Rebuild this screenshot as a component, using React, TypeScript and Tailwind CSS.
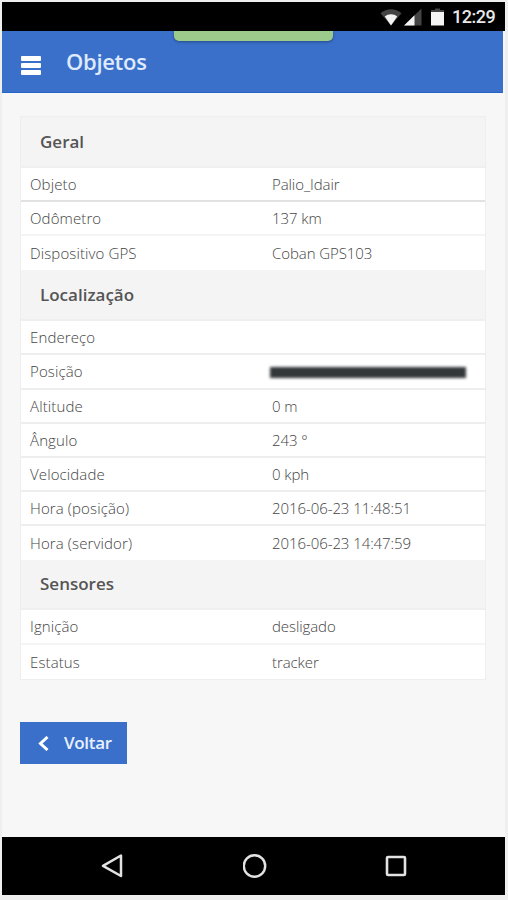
import React from 'react';

interface Row {
  label: string;
  value: string;
  height: string;
  border?: string;
  hidden?: boolean;
}

interface Section {
  title: string;
  height: string;
  rows: Row[];
}

const sections: Section[] = [
  {
    title: 'Geral',
    height: 'h-[51px]',
    rows: [
      { label: 'Objeto', value: 'Palio_Idair', height: 'h-[34px]', border: 'border-[#e2e2e2]' },
      { label: 'Odômetro', value: '137 km', height: 'h-[34px]', border: 'border-[#f4f4f4]' },
      { label: 'Dispositivo GPS', value: 'Coban GPS103', height: 'h-[34px]' },
    ],
  },
  {
    title: 'Localização',
    height: 'h-[51px]',
    rows: [
      { label: 'Endereço', value: '', height: 'h-[34px]' },
      { label: 'Posição', value: '', height: 'h-[35px]', hidden: true },
      { label: 'Altitude', value: '0 m', height: 'h-[34px]' },
      { label: 'Ângulo', value: '243 °', height: 'h-[34px]' },
      { label: 'Velocidade', value: '0 kph', height: 'h-[34px]' },
      { label: 'Hora (posição)', value: '2016-06-23 11:48:51', height: 'h-[34px]' },
      { label: 'Hora (servidor)', value: '2016-06-23 14:47:59', height: 'h-[34px]' },
    ],
  },
  {
    title: 'Sensores',
    height: 'h-[50px]',
    rows: [
      { label: 'Ignição', value: 'desligado', height: 'h-[35px]', border: 'border-[#f5f5f5]' },
      { label: 'Estatus', value: 'tracker', height: 'h-[34px]' },
    ],
  },
];

function StatusBar() {
  return (
    <div className="flex h-[29px] items-center justify-end bg-black pr-[10px]">
      <svg className="mr-[2px] h-[18px] w-[22px]" viewBox="0 0 22 18">
        <path d="M0.5 5.2C6.5-0.2 15.5-0.2 21.5 5.2L11 17.5Z" fill="#444" />
        <path d="M4.8 8.4C8.5 5.6 13.5 5.6 17.2 8.4L11 17.5Z" fill="#f4f4f4" />
      </svg>
      <svg className="mr-[9px] h-[18px] w-[18px]" viewBox="0 0 18 18">
        <path d="M0 17.5L17.5 0.5V17.5Z" fill="#444" />
        <path d="M0 17.5L10.5 7.3V17.5Z" fill="#f4f4f4" />
      </svg>
      <svg className="mr-[8px] h-[18px] w-[13px]" viewBox="0 0 13 18">
        <path d="M0 4V2H4V0.5H9V2H13V4Z" fill="#444" />
        <path d="M0 4H13V17.5H0Z" fill="#f4f4f4" />
      </svg>
      <span className="w-[43px] pt-px font-['Roboto'] text-[18px] leading-none font-medium tracking-[-0.5px] text-[#e8e8e8]">
        12:29
      </span>
    </div>
  );
}

function Header() {
  return (
    <header className="relative mr-[2px] flex h-[62px] items-center border-b border-[#2465c6] bg-[#3a70ca] pl-[19px]">
      <div className="absolute top-0 left-[172px] h-[10px] w-[159px] rounded-b-[5px] bg-[#9ccb8c] shadow-[0_1px_3px_rgba(0,0,0,0.35)]" />
      <button className="mt-[7px] flex w-5 flex-col gap-[2px]" aria-label="Menu">
        <span className="h-[5px] rounded-[1px] bg-white" />
        <span className="h-[5px] rounded-[1px] bg-white" />
        <span className="h-[5px] rounded-[1px] bg-white" />
      </button>
      <h1 className="mb-[2px] ml-[25px] text-[22px] leading-none font-semibold tracking-[-0.3px] text-[#dfeafc]">
        Objetos
      </h1>
    </header>
  );
}

function DetailRow({ row, last }: { row: Row; last: boolean }) {
  return (
    <div
      className={`flex items-center bg-white pl-[9px] text-[15px] font-light text-[#444] ${row.height} ${
        last ? '' : `border-b-2 ${row.border ?? 'border-[#eeeeee]'}`
      }`}
    >
      <span className="w-[242px] tracking-[0.12px]">{row.label}</span>
      {row.hidden ? (
        <span className="-ml-[2px] h-[11px] w-[196px] translate-y-px bg-[#33373a] blur-[1.5px]" />
      ) : (
        <span className="tracking-[-0.08px]">{row.value}</span>
      )}
    </div>
  );
}

export default function App() {
  return (
    <div className="h-[900px] w-[508px] bg-[#efefef] pt-[2px] pl-[2px] font-['Open_Sans',sans-serif]">
      <div className="flex h-[893px] w-[503px] flex-col bg-[#f7f7f7]">
        <StatusBar />
        <Header />

        <main className="flex-1 pt-[23px] pl-[18px]">
          <div className="w-[466px] border border-[#eeeeee]">
            {sections.map((section) => (
              <section key={section.title}>
                <h2
                  className={`flex items-center border-b-2 border-[#efefef] bg-[#f4f4f4] pl-[19px] text-[17px] font-semibold text-[#555] ${section.height}`}
                >
                  {section.title}
                </h2>
                {section.rows.map((row, i) => (
                  <DetailRow key={row.label} row={row} last={i === section.rows.length - 1} />
                ))}
              </section>
            ))}
          </div>

          <button className="mt-[42px] flex h-[42px] w-[107px] items-center bg-[#3a70ca] pl-[18px] text-[17px] font-semibold tracking-[-0.3px] text-[#e9f1ff]">
            <svg className="mr-[15px] h-[15px] w-[11px]" viewBox="0 0 11 15">
              <path d="M9.5 1L2.5 7.5L9.5 14" fill="none" stroke="#fff" strokeWidth="3" />
            </svg>
            Voltar
          </button>
        </main>

        <nav className="flex h-[58px] items-center justify-between bg-black pr-[97px] pl-[99px]">
          <svg className="h-6 w-6" viewBox="0 0 24 24">
            <path d="M20 1.5V22L2 11.8Z" fill="none" stroke="#e2e2e2" strokeWidth="2.5" strokeLinejoin="round" />
          </svg>
          <svg className="h-6 w-6" viewBox="0 0 24 24">
            <circle cx="11.5" cy="12" r="10.7" fill="none" stroke="#e2e2e2" strokeWidth="2.4" />
          </svg>
          <svg className="h-6 w-6" viewBox="0 0 24 24">
            <rect x="3" y="3" width="18" height="18" rx="1" fill="none" stroke="#e2e2e2" strokeWidth="2.6" />
          </svg>
        </nav>
      </div>
    </div>
  );
}
